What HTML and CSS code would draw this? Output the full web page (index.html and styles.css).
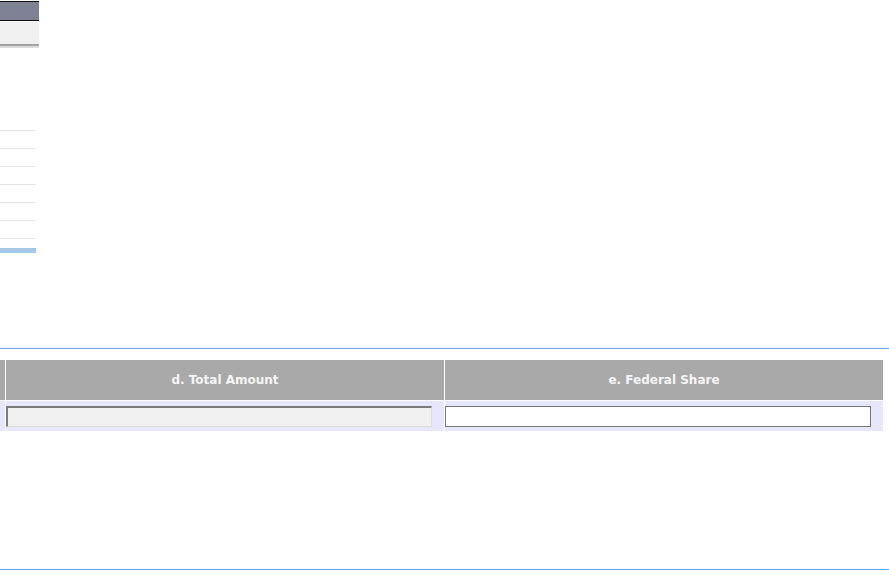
FILE: index.html
```html
<!DOCTYPE html>
<html>
<head>
<meta charset="utf-8">
<title>Budget</title>
<link rel="stylesheet" href="styles.css">
</head>
<body>
<div class="side">
  <div class="side-title"></div>
  <div class="side-band"></div>
  <ul class="side-list">
    <li></li><li></li><li></li><li></li><li></li><li></li>
  </ul>
  <div class="side-bar"></div>
</div>
<div class="rule rule-top"></div>
<table class="grid">
  <colgroup>
    <col class="c-a"><col class="c-b"><col class="c-c">
  </colgroup>
  <thead>
    <tr>
      <th></th>
      <th>d. Total Amount</th>
      <th>e. Federal Share</th>
    </tr>
  </thead>
  <tbody>
    <tr>
      <td></td>
      <td><input class="fld fld-off" type="text" disabled></td>
      <td><input class="fld" type="text"></td>
    </tr>
  </tbody>
</table>
<div class="rule rule-bottom"></div>
</body>
</html>
```
FILE: styles.css
```css
html, body {
  margin: 0;
  padding: 0;
  background: #ffffff;
  font-family: "DejaVu Sans", Verdana, sans-serif;
}
.side {
  width: 39px;
}
.side-title {
  margin-top: 1px;
  height: 18px;
  background: #7e8093;
  border-top: 1px solid #111;
  border-bottom: 1px solid #111;
}
.side-band {
  margin-top: 1px;
  height: 22px;
  background: #f0f0f0;
  border-bottom: 2px solid #a4a4a4;
  box-shadow: 0 2px 0 #dcdcdc;
}
.side-list {
  list-style: none;
  margin: 84px 0 0 0;
  padding: 0;
  width: 36px;
  border-top: 1px solid #e6e6e6;
}
.side-list li {
  height: 17px;
  border-bottom: 1px solid #e6e6e6;
}
.side-bar {
  margin-top: 9px;
  width: 36px;
  height: 5px;
  background: #a5c8e6;
}
.rule {
  height: 0;
  border-top: 1px solid #6ea6f2;
}
.rule-top {
  margin-top: 95px;
}
.grid {
  margin: 10px 0 0 -1px;
  border-collapse: separate;
  border-spacing: 1px;
  table-layout: fixed;
  width: 885px;
}
.c-a { width: 5px; }
.c-b { width: 438px; }
.c-c { width: 438px; }
.grid th {
  height: 40px;
  padding: 0;
  background: #a9a9a9;
  color: #f6f6f6;
  font-size: 12px;
  font-weight: bold;
  text-align: center;
  vertical-align: middle;
}
.grid td {
  height: 30px;
  padding: 0;
  background: #e6e6fc;
  vertical-align: top;
}
.fld {
  display: block;
  box-sizing: border-box;
  width: 426px;
  height: 21px;
  margin: 5px 0 0 0;
  padding: 0 3px;
  background: #ffffff;
  border: 1px solid #767676;
  font-size: 12px;
}
.fld-off {
  background: #f0f0f0;
  border-style: solid;
  border-width: 2px 1px 1px 2px;
  border-color: #7a7a7a #dcdcdc #dcdcdc #7a7a7a;
}
.rule-bottom {
  margin-top: 137px;
}
```
